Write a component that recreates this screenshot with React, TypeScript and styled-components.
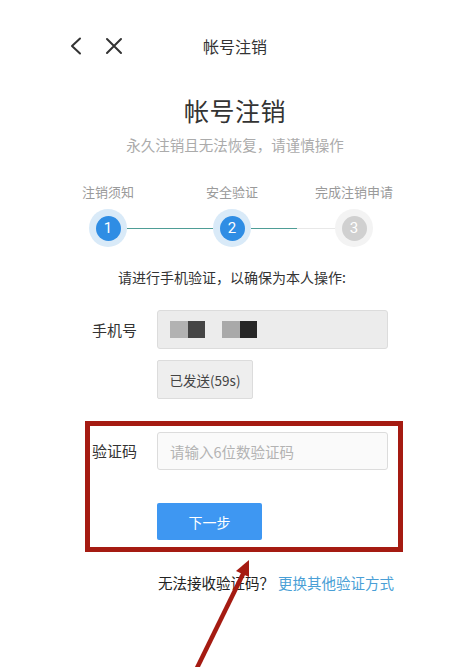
import React from "react";
import styled, { createGlobalStyle } from "styled-components";

const Global = createGlobalStyle`
  html, body { margin: 0; padding: 0; background: #fff; }
  body { font-family: "Noto Sans CJK SC", "Noto Sans", sans-serif; color: #333; }
  * { box-sizing: border-box; }
`;

const Page = styled.div`
  position: relative;
  width: 470px;
  height: 667px;
  overflow: hidden;
  background: #fff;
  display: flex;
  flex-direction: column;
`;

const TopBar = styled.div`
  margin-top: 24px;
  height: 44px;
  display: grid;
  grid-template-columns: 1fr auto 1fr;
  align-items: center;
`;

const NavIcons = styled.div`
  display: flex;
  align-items: center;
  gap: 22px;
  padding-left: 69px;
`;

const BarTitle = styled.div`
  font-size: 16px;
  color: #333;
  line-height: 22px;
`;

const Heading = styled.h1`
  margin: 25px 0 0;
  font-size: 25px;
  font-weight: 400;
  line-height: 34px;
  color: #333;
  text-align: center;
  letter-spacing: 0.5px;
`;

const Sub = styled.div`
  margin-top: 8px;
  font-size: 14.5px;
  line-height: 20px;
  color: #ababab;
  text-align: center;
`;

const Steps = styled.div`
  margin: 28px 0 0 89px;
  display: flex;
  align-items: flex-end;
`;

const Step = styled.div`
  width: 38px;
  display: flex;
  flex-direction: column;
  align-items: center;
  gap: 8px;
`;

const StepLabel = styled.div`
  font-size: 13px;
  line-height: 18px;
  color: #9a9a9a;
  white-space: nowrap;
`;

const Circle = styled.div<{ $active: boolean }>`
  width: 38px;
  height: 38px;
  border-radius: 50%;
  background: ${(p) => (p.$active ? "#d9eaf8" : "#f3f3f3")};
  display: flex;
  align-items: center;
  justify-content: center;
`;

const Dot = styled.div<{ $active: boolean }>`
  width: 25px;
  height: 25px;
  border-radius: 50%;
  background: ${(p) => (p.$active ? "#2f8de4" : "#d0d0d0")};
  color: #fff;
  font-family: Roboto, "Noto Sans", sans-serif;
  font-size: 15px;
  line-height: 25px;
  text-align: center;
`;

const Connector = styled.div<{ $w: number; $done: number }>`
  width: ${(p) => p.$w}px;
  height: 1.5px;
  margin-bottom: 18px;
  background: linear-gradient(
    to right,
    #4e9d96 0,
    #4e9d96 ${(p) => p.$done}px,
    #e8e8e8 ${(p) => p.$done}px,
    #e8e8e8 100%
  );
`;

const Instruction = styled.div`
  margin-top: 20px;
  font-size: 14px;
  line-height: 20px;
  color: #333;
  text-align: center;
  padding-right: 6px;
`;

const Form = styled.div`
  margin-left: 90px;
  width: 308px;
  display: flex;
  flex-direction: column;
`;

const Row = styled.div<{ $top: number }>`
  margin-top: ${(p) => p.$top}px;
  padding-left: 2px;
  display: flex;
  align-items: center;
`;

const Label = styled.div`
  width: 65px;
  font-size: 15px;
  line-height: 20px;
  color: #333;
`;

const Field = styled.div<{ $filled?: boolean; $h: number }>`
  width: 231px;
  height: ${(p) => p.$h}px;
  border: 1px solid #dcdcdc;
  border-radius: 3px;
  background: ${(p) => (p.$filled ? "#ececec" : "#fafafa")};
  display: flex;
  align-items: center;
  padding-left: 12px;
  font-size: 14.5px;
  color: #b3b3b3;
`;

const Mask = styled.span<{ $c: string }>`
  width: 17.5px;
  height: 17px;
  background: ${(p) => p.$c};
`;

const MaskGroup = styled.div`
  display: flex;
  gap: 17px;
`;

const Pair = styled.div`
  display: flex;
`;

const SendBtn = styled.div`
  margin: 11px 0 0 67px;
  width: 96px;
  height: 39px;
  border: 1px solid #dcdcdc;
  border-radius: 2px;
  background: #eeeeee;
  display: flex;
  align-items: center;
  justify-content: center;
  font-size: 13.5px;
  color: #444;
`;

const Highlight = styled.div`
  margin: 22px -5px 0;
  border: 5px solid #a51b12;
  padding: 6px 0 7px;
  display: flex;
  flex-direction: column;
`;

const NextBtn = styled.div`
  margin: 33px 0 0 67px;
  width: 105px;
  height: 37px;
  border-radius: 2px;
  background: #3e97f2;
  color: #fff;
  font-size: 14px;
  display: flex;
  align-items: center;
  justify-content: center;
`;

const Help = styled.div`
  margin: 21px 0 0 158px;
  display: flex;
  gap: 4px;
  font-size: 14.5px;
  line-height: 20px;
  color: #222;
`;

const Link = styled.span`
  color: #4a9fd6;
`;

const ArrowLayer = styled.svg`
  position: absolute;
  left: 0;
  top: 0;
  pointer-events: none;
`;

export default function App() {
  return (
    <>
      <Global />
      <Page>
        <TopBar>
          <NavIcons>
            <svg width="14" height="18" viewBox="0 0 14 18">
              <path d="M11 1.5 L3 9 L11 16.5" fill="none" stroke="#333" strokeWidth="2" strokeLinecap="round" strokeLinejoin="round" />
            </svg>
            <svg width="18" height="18" viewBox="0 0 18 18">
              <path d="M2 2 L16 16 M16 2 L2 16" fill="none" stroke="#333" strokeWidth="2" strokeLinecap="round" />
            </svg>
          </NavIcons>
          <BarTitle>帐号注销</BarTitle>
          <div />
        </TopBar>

        <Heading>帐号注销</Heading>
        <Sub>永久注销且无法恢复，请谨慎操作</Sub>

        <Steps>
          <Step>
            <StepLabel>注销须知</StepLabel>
            <Circle $active><Dot $active>1</Dot></Circle>
          </Step>
          <Connector $w={86} $done={86} />
          <Step>
            <StepLabel>安全验证</StepLabel>
            <Circle $active><Dot $active>2</Dot></Circle>
          </Step>
          <Connector $w={84} $done={46} />
          <Step>
            <StepLabel>完成注销申请</StepLabel>
            <Circle $active={false}><Dot $active={false}>3</Dot></Circle>
          </Step>
        </Steps>

        <Instruction>请进行手机验证，以确保为本人操作:</Instruction>

        <Form>
          <Row $top={23}>
            <Label>手机号</Label>
            <Field $filled $h={39}>
              <MaskGroup>
                <Pair>
                  <Mask $c="#b2b2b2" />
                  <Mask $c="#454545" />
                </Pair>
                <Pair>
                  <Mask $c="#a9a9a9" />
                  <Mask $c="#262626" />
                </Pair>
              </MaskGroup>
            </Field>
          </Row>
          <SendBtn>已发送(59s)</SendBtn>

          <Highlight>
            <Row $top={0}>
              <Label>验证码</Label>
              <Field $h={38}>请输入6位数验证码</Field>
            </Row>
            <NextBtn>下一步</NextBtn>
          </Highlight>
        </Form>

        <Help>
          <span>无法接收验证码？</span>
          <Link>更换其他验证方式</Link>
        </Help>

        <ArrowLayer width="470" height="667" viewBox="0 0 470 667">
          <line x1="196" y1="670" x2="244" y2="572" stroke="#a51b12" strokeWidth="4.5" />
          <polygon points="249,560 236,571 249,577" fill="#a51b12" />
        </ArrowLayer>
      </Page>
    </>
  );
}
